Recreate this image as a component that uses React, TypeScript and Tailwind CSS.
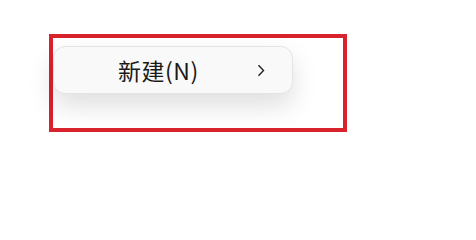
export default function App() {
	return (
		<div className="h-[222px] w-[476px] bg-white pl-[49px] pt-[34px] font-['Noto_Sans_CJK_SC',sans-serif]">
			<div className="h-[98px] w-[298px] border-4 border-[#d8222c] pt-[8px]">
				<div className="flex h-[48px] w-[240px] items-center rounded-[12px] border border-[#e4e4e4] bg-[#f9f9f9] shadow-[0_12px_26px_rgba(0,0,0,0.13)]">
					<span className="ml-[64px] text-[23px] leading-none tracking-[0.5px] text-[#1a1a1a]">新建(N)</span>
					<svg
						className="ml-auto mr-[27px]"
						width="8"
						height="13"
						viewBox="0 0 8 13"
						fill="none"
					>
						<path d="M1.5 1.2 L6.5 6.5 L1.5 11.8" stroke="#222" strokeWidth="1.4" />
					</svg>
				</div>
			</div>
		</div>
	);
}
